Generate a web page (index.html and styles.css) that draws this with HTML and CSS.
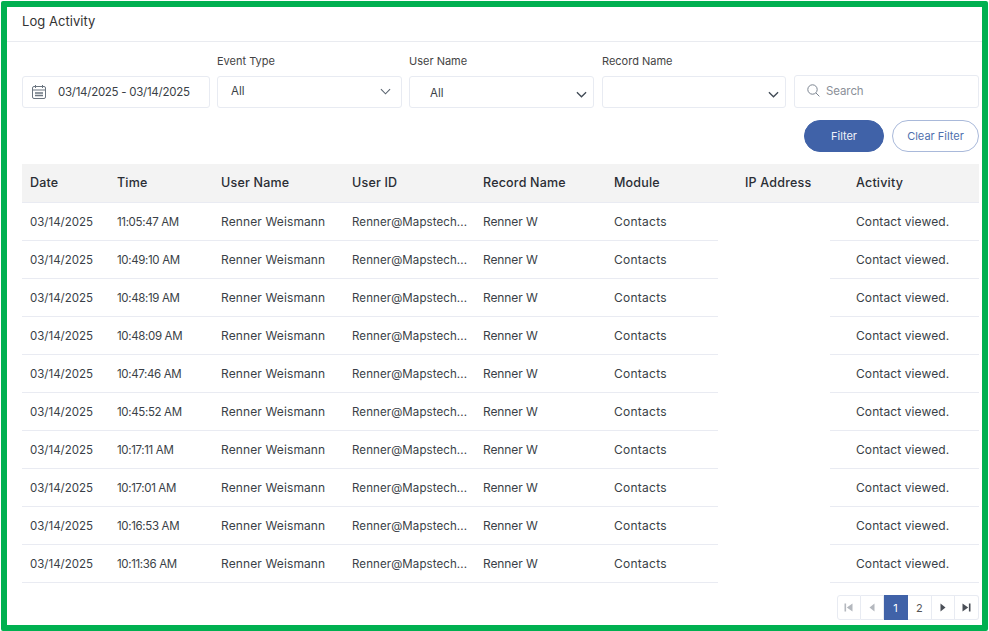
FILE: index.html
```html
<!DOCTYPE html>
<html lang="en">
<head>
<meta charset="utf-8">
<title>Log Activity</title>
<link rel="stylesheet" href="styles.css">
</head>
<body>
<main class="frame">
  <header class="title-bar"><h1>Log Activity</h1></header>
  <section class="filters">
    <div class="field date-field">
      <div class="control">
        <svg class="cal" viewBox="0 0 14 14" width="14" height="14" fill="none" stroke="#6b7580" stroke-width="1"><rect x="0.5" y="1.5" width="13" height="12" rx="1.5"/><path d="M0.5 5h13M3.5 0v3M10.5 0v3"/><path d="M3 8h8M3 10.5h8" stroke-width="1.4"/></svg>
        <span>03/14/2025 - 03/14/2025</span>
      </div>
    </div>
    <div class="field event-field">
      <label>Event Type</label>
      <div class="control select select-up"><span>All</span><svg class="chev" viewBox="0 0 12 7" width="11" height="7" fill="none" stroke="#5a6470" stroke-width="1.2"><path d="M1 1l5 5 5-5"/></svg></div>
    </div>
    <div class="field user-field">
      <label>User Name</label>
      <div class="control select select-user"><span>All</span><svg class="chev" viewBox="0 0 12 7" width="11" height="7" fill="none" stroke="#3f4954" stroke-width="1.4"><path d="M1 1l5 5 5-5"/></svg></div>
    </div>
    <div class="field record-field">
      <label>Record Name</label>
      <div class="control select select-record"><span></span><svg class="chev" viewBox="0 0 12 7" width="11" height="7" fill="none" stroke="#3f4954" stroke-width="1.4"><path d="M1 1l5 5 5-5"/></svg></div>
    </div>
    <div class="field search-field">
      <div class="control search">
        <svg viewBox="0 0 13 13" width="13" height="13" fill="none" stroke="#7b8490" stroke-width="1"><circle cx="5.5" cy="5.5" r="4.7"/><path d="M9 9l3.4 3.4"/></svg>
        <span>Search</span>
      </div>
    </div>
  </section>
  <div class="actions">
    <button class="btn primary">Filter</button>
    <button class="btn outline">Clear Filter</button>
  </div>
  <section class="table">
    <div class="thead">
      <div>Date</div><div>Time</div><div>User Name</div><div>User ID</div><div>Record Name</div><div>Module</div><div>IP Address</div><div>Activity</div>
    </div>
    <div class="row"><div class="c">03/14/2025</div><div class="c">11:05:47 AM</div><div class="c">Renner Weismann</div><div class="c">Renner@Mapstech...</div><div class="c">Renner W</div><div class="c">Contacts</div><div class="ip"></div><div class="c act">Contact viewed.</div></div>
    <div class="row"><div class="c">03/14/2025</div><div class="c">10:49:10 AM</div><div class="c">Renner Weismann</div><div class="c">Renner@Mapstech...</div><div class="c">Renner W</div><div class="c">Contacts</div><div class="ip"></div><div class="c act">Contact viewed.</div></div>
    <div class="row"><div class="c">03/14/2025</div><div class="c">10:48:19 AM</div><div class="c">Renner Weismann</div><div class="c">Renner@Mapstech...</div><div class="c">Renner W</div><div class="c">Contacts</div><div class="ip"></div><div class="c act">Contact viewed.</div></div>
    <div class="row"><div class="c">03/14/2025</div><div class="c">10:48:09 AM</div><div class="c">Renner Weismann</div><div class="c">Renner@Mapstech...</div><div class="c">Renner W</div><div class="c">Contacts</div><div class="ip"></div><div class="c act">Contact viewed.</div></div>
    <div class="row"><div class="c">03/14/2025</div><div class="c">10:47:46 AM</div><div class="c">Renner Weismann</div><div class="c">Renner@Mapstech...</div><div class="c">Renner W</div><div class="c">Contacts</div><div class="ip"></div><div class="c act">Contact viewed.</div></div>
    <div class="row"><div class="c">03/14/2025</div><div class="c">10:45:52 AM</div><div class="c">Renner Weismann</div><div class="c">Renner@Mapstech...</div><div class="c">Renner W</div><div class="c">Contacts</div><div class="ip"></div><div class="c act">Contact viewed.</div></div>
    <div class="row"><div class="c">03/14/2025</div><div class="c">10:17:11 AM</div><div class="c">Renner Weismann</div><div class="c">Renner@Mapstech...</div><div class="c">Renner W</div><div class="c">Contacts</div><div class="ip"></div><div class="c act">Contact viewed.</div></div>
    <div class="row"><div class="c">03/14/2025</div><div class="c">10:17:01 AM</div><div class="c">Renner Weismann</div><div class="c">Renner@Mapstech...</div><div class="c">Renner W</div><div class="c">Contacts</div><div class="ip"></div><div class="c act">Contact viewed.</div></div>
    <div class="row"><div class="c">03/14/2025</div><div class="c">10:16:53 AM</div><div class="c">Renner Weismann</div><div class="c">Renner@Mapstech...</div><div class="c">Renner W</div><div class="c">Contacts</div><div class="ip"></div><div class="c act">Contact viewed.</div></div>
    <div class="row"><div class="c">03/14/2025</div><div class="c">10:11:36 AM</div><div class="c">Renner Weismann</div><div class="c">Renner@Mapstech...</div><div class="c">Renner W</div><div class="c">Contacts</div><div class="ip"></div><div class="c act">Contact viewed.</div></div>
  </section>
  <nav class="pager">
    <a class="dim"><svg viewBox="0 0 9 9" width="9" height="9"><path d="M0.5 0.5h1.6v8H0.5zM8.5 0.5v8L2.8 4.5z" fill="#b4b8be"/></svg></a>
    <a class="dim"><svg viewBox="0 0 6 9" width="6" height="9"><path d="M5.5 0.5v8L0.5 4.5z" fill="#b4b8be"/></svg></a>
    <a class="on">1</a>
    <a>2</a>
    <a><svg viewBox="0 0 6 9" width="6" height="9"><path d="M0.5 0.5v8l5-4z" fill="#4a4f57"/></svg></a>
    <a><svg viewBox="0 0 9 9" width="9" height="9"><path d="M0.5 0.5v8l5.7-4zM6.9 0.5h1.6v8H6.9z" fill="#4a4f57"/></svg></a>
  </nav>
</main>
</body>
</html>
```
FILE: styles.css
```css
* { box-sizing: border-box; }
html, body { margin: 0; padding: 0; background: #fff; }
body {
  width: 989px;
  height: 631px;
  overflow: hidden;
  padding: 1px 1px 0 1px;
  font-family: "Inter", "Noto Sans", sans-serif;
  font-size: 11.5px;
  color: #3a3f47;
}
.frame {
  width: 987px;
  height: 630px;
  border: 6px solid #00b050;
  border-radius: 2px;
  background: #fff;
  padding: 0 3px 0 15px;
}
.title-bar {
  height: 35px;
  margin: 0 -3px 0 -15px;
  padding: 0 15px;
  border-bottom: 1px solid #e9ebf0;
  display: flex;
  align-items: center;
}
h1 {
  margin: 0 0 6px;
  font-size: 13px;
  font-weight: 400;
  letter-spacing: 0.05px;
  color: #333;
}
.filters {
  display: flex;
  height: 66px;
  align-items: flex-end;
}
.field { display: flex; flex-direction: column; }
label {
  font-size: 11px;
  line-height: 16px;
  margin-bottom: 7px;
  color: #444;
}
.control {
  height: 32px;
  border: 1px solid #e8ebf2;
  border-radius: 3px;
  display: flex;
  align-items: center;
  background: #fff;
}
.date-field { width: 188px; margin-right: 7px; }
.event-field { width: 185px; margin-right: 7px; }
.user-field { width: 185px; margin-right: 8px; }
.record-field { width: 184px; margin-right: 8px; }
.search-field { width: 185px; }
.date-field .control { padding-left: 9px; gap: 12px; letter-spacing: -0.27px; }
.select { justify-content: space-between; padding: 0 10px 0 13px; }
.select-up span { margin-bottom: 2px; }
.select-up svg { margin-bottom: 2px; }
.select-user { padding: 0 6px 0 20px; }
.select-user span { margin-top: 1px; }
.select-user svg, .select-record svg { margin-top: 4px; }
.select-record { padding-right: 6px; }
.search { height: 33px; padding: 0 10px 2px 12px; gap: 6px; color: #8b9098; }
.search span { letter-spacing: -0.1px; }
.actions {
  display: flex;
  justify-content: flex-end;
  gap: 8px;
  height: 32px;
  margin-top: 12px;
}
.btn {
  height: 32px;
  border-radius: 16px;
  font: inherit;
  font-size: 11px;
  padding: 0;
}
.primary { width: 80px; background: #4062a8; border: 1px solid #4062a8; color: #f0f3fa; }
.outline { width: 87px; background: #fff; border: 1px solid #a9b9da; color: #4f6fae; }
.table { margin-top: 12px; }
.thead {
  display: grid;
  grid-template-columns: 87px 104px 131px 131px 131px 131px 111px 131px;
  height: 39px;
  padding-bottom: 2px;
  background: #f3f3f3;
  border-bottom: 1px solid #e9ebf2;
  align-items: center;
  font-size: 12.5px;
  font-weight: 500;
  letter-spacing: 0.2px;
  color: #2a2d33;
}
.thead div { padding-left: 8px; }
.row {
  display: grid;
  grid-template-columns: 87px 104px 131px 131px 131px 112px 112px 149px;
  height: 38px;
}
.c {
  padding-left: 8px;
  display: flex;
  align-items: center;
  border-bottom: 1px solid #e9ebf2;
  white-space: nowrap;
  overflow: hidden;
}
.row .c:nth-child(2) { letter-spacing: -0.35px; }
.row .c:nth-child(3) { font-size: 12px; letter-spacing: 0.12px; }
.row .c:nth-child(4) { letter-spacing: 0.1px; }
.row .c:nth-child(5) { font-size: 12px; letter-spacing: -0.1px; }
.row .c:nth-child(6) { font-size: 12px; letter-spacing: 0.25px; }
.act { padding-left: 26px; font-size: 12px; letter-spacing: 0.1px; }
.pager {
  display: flex;
  justify-content: flex-end;
  margin-top: 12px;
}
.pager a {
  width: 23.7px;
  height: 25px;
  display: flex;
  align-items: center;
  justify-content: center;
  border: 1px solid #e8ebf2;
  border-left: 0;
  font-size: 11px;
  color: #555;
}
.pager a:first-child { border-left: 1px solid #e8ebf2; border-radius: 3px 0 0 3px; }
.pager a:last-child { border-radius: 0 3px 3px 0; }
.pager .on { background: #4062a8; border-color: #4062a8; color: #fff; }
```
